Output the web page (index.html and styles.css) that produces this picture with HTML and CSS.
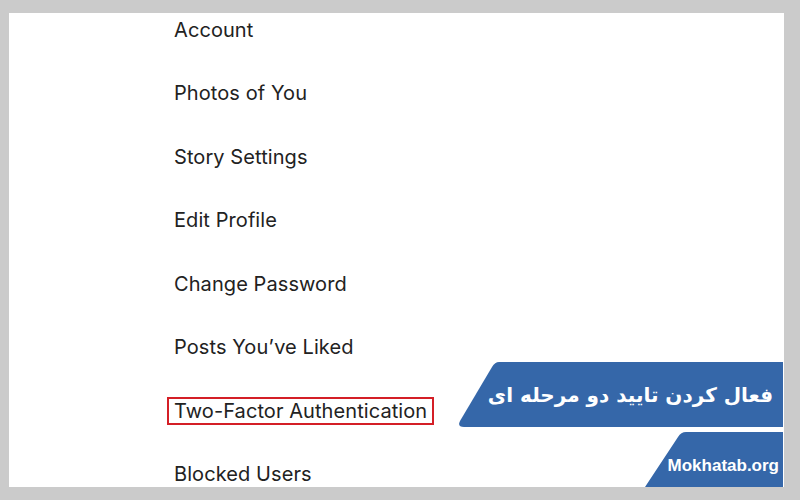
FILE: index.html
```html
<!DOCTYPE html>
<html lang="en">
<head>
<meta charset="utf-8">
<title>Two-Factor Authentication</title>
<link rel="stylesheet" href="styles.css">
</head>
<body>
<div class="card">
  <ul class="menu">
    <li class="item">Account</li>
    <li class="item">Photos of You</li>
    <li class="item">Story Settings</li>
    <li class="item">Edit Profile</li>
    <li class="item">Change Password</li>
    <li class="item">Posts You’ve Liked</li>
    <li class="item"><span class="highlight">Two-Factor Authentication</span></li>
    <li class="item">Blocked Users</li>
  </ul>
  <div class="banner banner-title">
    <svg class="banner-shape" viewBox="0 0 326 65" preserveAspectRatio="none"><path d="M42,0 H326 V65 H7 Q0,65 3,59 L35,5 Q38,0 42,0 Z"/></svg>
    <span class="title" dir="rtl" lang="fa">فعال کردن تایید دو مرحله ای</span>
  </div>
  <div class="banner banner-site">
    <svg class="banner-shape" viewBox="0 0 138 55" preserveAspectRatio="none"><path d="M41,0 H138 V55 H0 L33,5 Q36,0 41,0 Z"/></svg>
    <span class="site">Mokhatab.org</span>
  </div>
</div>
</body>
</html>
```
FILE: styles.css
```css
html, body {
  margin: 0;
  padding: 0;
}
body {
  background: #cbcbcb;
  width: 800px;
  height: 500px;
  overflow: hidden;
}
.card {
  position: relative;
  margin: 13px 16px 0 9px;
  height: 474px;
  background: #ffffff;
  overflow: hidden;
}
.menu {
  list-style: none;
  margin: 0;
  padding: 5px 0 0 165px;
  display: grid;
  grid-auto-rows: 63.43px;
}
.item {
  font-family: Inter, "Liberation Sans", Arial, sans-serif;
  font-size: 20px;
  line-height: 24px;
  letter-spacing: 0.08px;
  color: #222222;
}
.highlight {
  display: inline-block;
  border: 2px solid #d41f26;
  padding: 0 5px;
  margin: -2px 0 0 -7px;
}
.banner {
  position: absolute;
  right: 1px;
  display: flex;
  align-items: center;
  justify-content: flex-end;
}
.banner-shape {
  position: absolute;
  inset: 0;
  width: 100%;
  height: 100%;
  fill: #3567a9;
}
.banner-title {
  left: 448px;
  top: 349px;
  height: 65px;
  padding-right: 10px;
}
.banner-site {
  left: 636px;
  top: 419px;
  height: 55px;
  padding-right: 4px;
}
.title {
  position: relative;
  white-space: nowrap;
  font-family: "DejaVu Sans", sans-serif;
  font-weight: bold;
  font-size: 20px;
  color: #ffffff;
}
.site {
  position: relative;
  font-family: "Liberation Sans", Arial, sans-serif;
  font-weight: bold;
  font-size: 17px;
  color: #ffffff;
  margin-top: 12px;
}
```
